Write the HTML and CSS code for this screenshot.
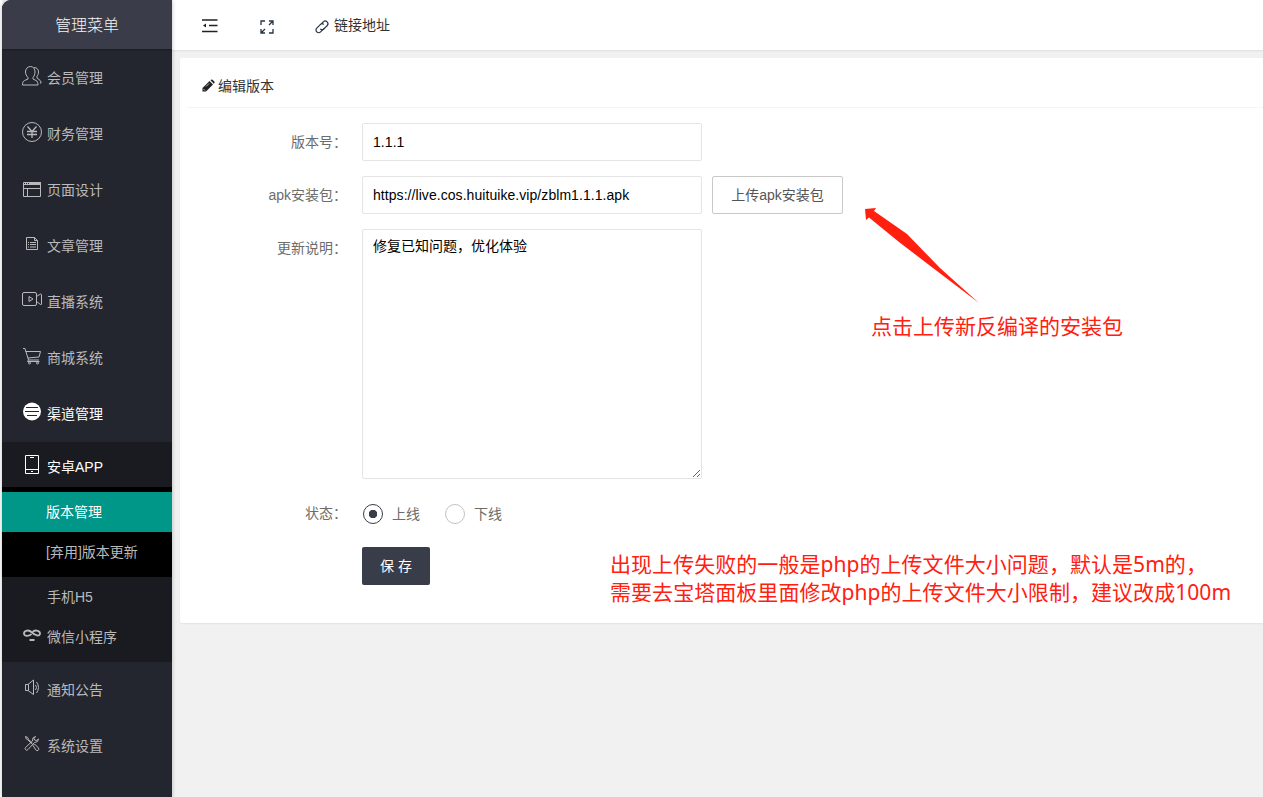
FILE: index.html
```
<!DOCTYPE html>
<html lang="zh-CN">
<head>
<meta charset="utf-8">
<title>编辑版本</title>
<link rel="stylesheet" href="styles.css">
</head>
<body>
<div class="app">
  <aside class="side">
    <div class="logo">管理菜单</div>
    <nav class="menu">
      <a class="item"><svg class="ico" viewBox="0 0 20 20"><path d="M6 11.500C4.500 10 3.500 8 3.500 6c0-3 2-5.500 5-5.500S13 3 13 6c0 2-.8 4-2 5.500v1.500l3 1.500c1.500.8 2 2 2 4.500H.5c0-2.500.5-3.700 2-4.500l3.500-1.500zM12 1.500c3 0 4.500 2 4.500 4.500 0 2-.5 3-1.500 4v2l2 1.500c1.500 1 2 2 2 3.500h-1"/></svg>会员管理</a>
      <a class="item"><svg class="ico" viewBox="0 0 20 20"><circle cx="10" cy="10" r="9.500"/><path d="M5.500 4.500l4.500 5 4.500-5M10 9v7M5 9.500h10M5 12.500h10" stroke-width="1.300"/></svg>财务管理</a>
      <a class="item"><svg class="ico" viewBox="0 0 20 20"><path d="M1.500 4.500h17v14h-17zM1.500 10.500h17M5.500 10.500v8"/><path class="solid" d="M8 4h11v3H8zM1 6h18v1H1z"/><path d="M3 5.500h1M5 5.500h1M7 5.500h1"/></svg>页面设计</a>
      <a class="item"><svg class="ico" viewBox="0 0 20 20"><path d="M4.500 3.500h8l3 3v9h-11zM12.500 3.500v3h3M6 8.500h1M8 8.500h6M6 10.500h1M8 10.500h6M6 13h1M8 13h6"/></svg>文章管理</a>
      <a class="item"><svg class="ico" viewBox="0 0 20 20"><rect x=".5" y="2.500" width="14" height="13" rx="1.500"/><path d="M14.500 6.500l4-2.500q1 0 1 1v9q0 1-1 .5l-4-3M7 6.500v5l4-2.500z"/></svg>直播系统</a>
      <a class="item"><svg class="ico" viewBox="0 0 20 20"><path d="M1 2.500h2L6.500 14H17M3.500 5.500h15L17 11 6 12M6.500 14l-1 1.500h12"/><circle cx="7.500" cy="17" r="1"/><circle cx="15.500" cy="17" r="1"/></svg>商城系统</a>
      <a class="item on"><svg class="ico" viewBox="0 0 20 20"><circle class="solid" cx="10" cy="9.500" r="9"/><path class="cut" d="M4 5.500h12M3 9.500h14M5 13.500h10"/></svg>渠道管理</a>
      <div class="sub">
        <a class="row on"><svg class="ico phone" viewBox="0 0 20 20"><path d="M3.500 1.500h13v18h-13zM3.500 15.500h13M8 3.500h4M9 17.500h2"/></svg>安卓APP</a>
        <div class="leafs">
          <a class="row leaf now">版本管理</a>
          <a class="row leaf">[弃用]版本更新</a>
        </div>
        <a class="row bare">手机H5</a>
        <a class="row"><svg class="ico" viewBox="0 0 20 20"><path d="M9.500 9C8 11 2 12 2 8.500S7 4.500 10 7.500 18 12 18 8.500 12 4.500 10.500 7.500" stroke-width="1.800"/><path d="M7.500 15h5" stroke-width="2"/></svg>微信小程序</a>
      </div>
      <a class="item"><svg class="ico" viewBox="0 0 20 20"><path d="M3.500 6.500H6L11.500 2v14.500L6 12.500H3.500zM6.500 6.500v6M13.500 7q2 2.500 0 5M14.500 4q4 5.500 0 11"/></svg>通知公告</a>
      <a class="item"><svg class="ico" viewBox="0 0 20 20"><path d="M3.500 2.500l2 .8 1 2 4 4M3.500 2.500l.8 2.500 1.500.8 4 4M11 11.500l1.500-1.500 4 4q.8 2-.5 2.500t-2-.5zM13.500 2.500l-1.500 2q0 2 2.500 2l2-1.500q0 3.500-4 3.500l-6.500 7q-1.500 1.500-2.500 0t0-2l7-6.500q-.5-4 3-4.500z"/></svg>系统设置</a>
    </nav>
  </aside>
  <div class="main">
    <header class="bar">
      <svg class="i-fold" viewBox="0 0 16 14"><path d="M0 1h15.500M7 6.500h8.500M0 12.500h15.500" /><path class="solid" d="M1 6.500L4 4.500v4z"/></svg>
      <svg class="i-full" viewBox="0 0 14 14"><path d="M1 5V1h4M9 1h4v4M13 9v4H9M5 13H1V9M9 5l3.500-3.500M5 9l-3.500 3.500"/></svg>
      <a class="link"><svg class="i-link" viewBox="0 0 14 14"><g transform="rotate(-45 7 7)"><path d="M8 9.500H2.500a2.700 2.700 0 0 1 0-5.400H7.500A2.500 2.500 0 0 1 10 6.500M6 4.500"/><path d="M6.500 4.500M4.500 7A2.500 2.500 0 0 0 7 9.700H11.500a2.700 2.700 0 0 0 0-5.400H9"/></g></svg>链接地址</a>
    </header>
    <section class="card">
      <div class="head"><svg class="i-pen" viewBox="0 0 13 13"><path d="M.5 9L7.500 2l3.500 3.500-7 7L.5 12.500zM8.500 1.200Q9.500-.2 10.500.8l2 2Q13 3.500 11.800 4.700z"/><path class="nick" d="M1.500 10l1.500 1.500M4 7.500l3-3"/></svg>编辑版本</div>
      <form class="form">
        <div class="line"><label class="label">版本号：</label><input class="input" type="text" value="1.1.1"></div>
        <div class="line"><label class="label">apk安装包：</label><input class="input" type="text" value="https://live.cos.huituike.vip/zblm1.1.1.apk"><button class="btn upload" type="button">上传apk安装包</button></div>
        <div class="line"><label class="label">更新说明：</label><textarea class="input area">修复已知问题，优化体验</textarea></div>
        <div class="line state"><label class="label">状态：</label><span class="radio"><i class="dot checked"></i>上线</span><span class="radio"><i class="dot"></i>下线</span></div>
        <div class="line"><button class="btn save" type="button">保 存</button></div>
      </form>
    </section>
  </div>
  <svg class="arrow" viewBox="0 0 114 95"><path d="M0 1l11-1-2 3L42 26 75 60l39 35L68 60 34 34 4 9.500 1 12z"/></svg>
  <p class="note first">点击上传新反编译的安装包</p>
  <p class="note second">出现上传失败的一般是php的上传文件大小问题，默认是5m的，<br>需要去宝塔面板里面修改php的上传文件大小限制，建议改成100m</p>
</div>
</body>
</html>
```
FILE: styles.css
```
* { box-sizing: border-box; }
body { margin: 0; background: #f1f1f1; font: 14px/20px "Liberation Sans", "Noto Sans CJK SC", sans-serif; color: #333; }
.app { position: relative; display: flex; width: 1263px; height: 797px; overflow: hidden; background: linear-gradient(90deg, #fff 2px, #f1f1f1 2px); }
.side { width: 170px; margin-left: 2px; background: #23262f; border-radius: 9px 0 0 0; overflow: hidden; box-shadow: 0 0 4px rgba(0,0,0,.25); z-index: 1; }
.logo { height: 49px; padding-top: 1px; background: #3b3c49; color: #f4f4f4; font-size: 16px; font-weight: 300; line-height: 50px; text-align: center; box-shadow: 0 1px 2px rgba(0,0,0,.3); }
.menu { padding-top: 1px; }
.item, .row { display: flex; align-items: center; gap: 5px; padding-left: 20px; height: 56px; color: #b9babc; white-space: nowrap; }
.row { height: 40px; }
.item.on, .row.on { color: #fff; }
.ico { width: 20px; height: 20px; margin-top: -4px; flex: none; fill: none; stroke: currentColor; stroke-width: 1; }
.ico.phone { margin-top: -6px; }
.ico .solid { fill: currentColor; stroke: none; }
.ico .cut { stroke: #23262f; }
.sub { padding: 5px 0; background: #1a1b20; }
.leafs { padding: 5px 0; background: #000; }
.leaf { padding-left: 44px; }
.bare { padding-left: 45px; }
.row.now { background: #009688; color: #fff; }
.main { flex: 1; min-width: 0; }
.bar { display: flex; align-items: center; height: 50px; padding-left: 30px; background: #fff; box-shadow: 0 1px 2px rgba(0,0,0,.08); }
.bar svg { fill: none; stroke: #253444; }
.bar .i-fold { width: 16px; height: 14px; margin-top: 2px; stroke: #222; stroke-width: 1.300; }
.bar .solid { fill: #222; stroke: none; }
.i-full { width: 14px; height: 14px; margin: 4px 0 0 42px; stroke-width: 1.300; }
.link { display: flex; align-items: center; gap: 5px; margin-left: 41px; }
.i-link { width: 14px; height: 14px; margin-top: 4px; stroke-width: 1.200; overflow: visible; }
.card { height: 565px; margin: 8px 0 0 8px; background: #fff; border-radius: 2px 0 0 2px; box-shadow: 0 1px 2px rgba(0,0,0,.06); }
.head { display: flex; align-items: center; gap: 3px; height: 50px; margin-left: 7px; padding: 7px 0 0 15px; border-bottom: 1px solid #f5f5f5; }
.i-pen { width: 13px; height: 13px; margin-top: -1px; fill: #222; }
.nick { stroke: #fff; stroke-width: .7; }
.form { display: grid; gap: 15px; padding: 15px 0 0 182px; }
.line { display: flex; height: 38px; }
.line:nth-child(3) { height: 250px; }
.label { width: 167px; margin-left: -182px; margin-right: 15px; padding-top: 9px; text-align: right; color: #6c6c6c; }
.input { width: 340px; height: 38px; padding: 0 10px; border: 1px solid #e5e5e5; border-radius: 2px; background: #fff; color: #000; font: inherit; letter-spacing: .06px; outline: none; }
.area { height: 250px; padding: 6px 10px; letter-spacing: 0; resize: vertical; }
.btn { height: 38px; border-radius: 2px; font: inherit; padding: 0; }
.upload { width: 131px; margin-left: 10px; border: 1px solid #c9c9c9; background: #fff; color: #555; }
.save { width: 68px; border: 0; background: #393d49; color: #fff; }
.radio { display: flex; align-items: center; gap: 9px; margin-right: 24px; padding: 2px 0 0 1px; color: #6c6c6c; }
.dot { width: 20px; height: 20px; border: 1px solid #c2c2c2; border-radius: 50%; }
.dot.checked { border: 1.500px solid #393d49; background: radial-gradient(circle, #393d49 4px, transparent 4.500px); }
.arrow { position: absolute; left: 865px; top: 208px; width: 114px; height: 95px; fill: #ff2010; }
.note { position: absolute; margin: 0; color: #ff2010; font: 400 21px/28px "Noto Sans", "Noto Sans CJK SC", sans-serif; white-space: nowrap; }
.first { left: 871px; top: 312px; }
.second { left: 610px; top: 550px; letter-spacing: .05px; }
```
